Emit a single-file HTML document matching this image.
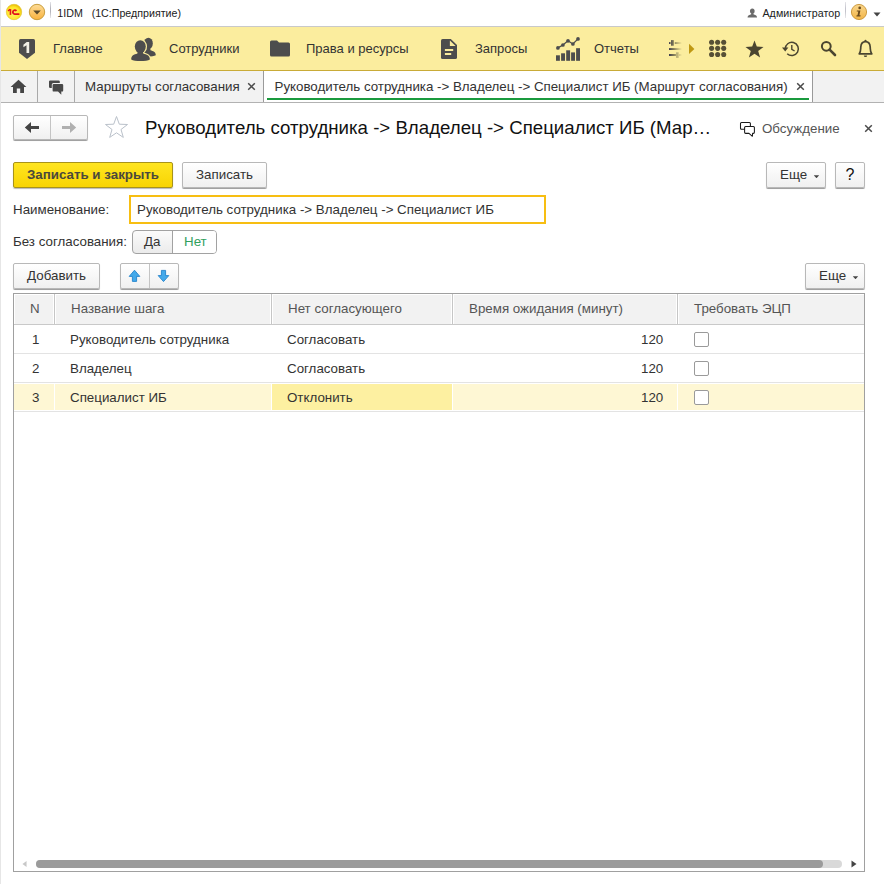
<!DOCTYPE html>
<html><head><meta charset="utf-8">
<style>
*{box-sizing:border-box;margin:0;padding:0}
html,body{width:884px;height:884px;overflow:hidden;background:#fff}
body{font-family:"Liberation Sans",sans-serif;font-size:13.33px;color:#333;position:relative}
.abs{position:absolute}
.t{position:absolute;white-space:pre;line-height:16px}
#edge{left:0;top:0;width:1px;height:884px;background:#e6e6e6}
#titlebar{left:0;top:0;width:884px;height:26px;background:#fff}
#tline{left:0;top:26px;width:884px;height:1px;background:#c9c9c9}
#nav{left:1px;top:27px;width:883px;height:43px;background:#fbed9e}
#navb{left:1px;top:70px;width:883px;height:1px;background:#c9ab37}
#tabs{left:1px;top:71px;width:883px;height:31px;background:#f2f2f2}
#tabsb{left:1px;top:102px;width:883px;height:1px;background:#b2b2b2}
.vsep{position:absolute;top:71px;width:1px;height:31px;background:#a9a9a9}
#acttab{left:263px;top:71px;width:550px;height:31px;background:#fff;border-left:1px solid #9a9a9a;border-right:1px solid #9a9a9a}
#actul{left:267px;top:98px;width:542px;height:2px;background:#1a9a3e}
.btn{position:absolute;border:1px solid #b8b8b8;border-radius:2px;background:linear-gradient(#ffffff,#f0f0f0);box-shadow:0 1px 0 rgba(0,0,0,.28),0 1px 1px rgba(0,0,0,.14);color:#333;text-align:center}
.nt{font-size:13px;color:#333}
.hs{top:294px;width:3px;height:30px;background:#c6c6c6;border-left:1px solid #fff;border-right:1px solid #fff}
.ws{top:383px;width:1px;height:28px;background:#fff}
</style></head><body>
<div class="abs" id="titlebar"></div>
<div class="abs" id="tline"></div>
<div class="abs" id="nav"></div>
<div class="abs" id="navb"></div>
<div class="abs" id="tabs"></div>
<div class="abs" id="tabsb"></div>
<div class="vsep" style="left:37px"></div>
<div class="vsep" style="left:74px"></div>
<div class="abs" id="acttab"></div>
<div class="abs" id="actul"></div>
<div class="abs" id="edge"></div>

<!-- title bar -->
<svg class="abs" style="left:5px;top:3px" width="18" height="18" viewBox="0 0 18 18"><defs><radialGradient id="g1" cx="0.45" cy="0.6" r="0.6"><stop offset="0" stop-color="#fff46a"/><stop offset="0.7" stop-color="#ffe628"/><stop offset="1" stop-color="#e8b800"/></radialGradient></defs><circle cx="9" cy="9" r="7.7" fill="url(#g1)" stroke="#e3c534" stroke-width="0.7"/><path d="M3.0 7.9 L5.2 6.4" fill="none" stroke="#e0141a" stroke-width="1.4"/><path d="M5.45 6.1 V11.9" fill="none" stroke="#e0141a" stroke-width="1.6"/><path d="M11.4 8 A1.95 1.95 0 1 0 9.7 11.05 H14.4" fill="none" stroke="#e0141a" stroke-width="1.8"/></svg>
<svg class="abs" style="left:28px;top:3px" width="18" height="18" viewBox="0 0 18 18"><defs><linearGradient id="g2" x1="0" y1="0" x2="0" y2="1"><stop offset="0" stop-color="#fddc98"/><stop offset="1" stop-color="#f8b23e"/></linearGradient></defs><circle cx="9" cy="9" r="7.7" fill="url(#g2)" stroke="#c39631" stroke-width="0.9"/><path d="M5.2 7.6 H12.8 L9 11.6 Z" fill="#5a4a2a"/></svg>
<div class="abs" style="left:50px;top:2px;width:1px;height:16px;background:linear-gradient(#e4e4e8,#b4b4bc 40%,#b4b4bc 60%,#e8e8ea)"></div>
<div class="t" style="left:57.3px;top:5px;font-size:10.67px;color:#222">1IDM   (1С:Предприятие)</div>
<svg class="abs" style="left:747.2px;top:7.6px" width="10.6" height="10.6" viewBox="0 0 10 10"><g fill="#6b6b6b"><ellipse cx="5" cy="2.9" rx="2.2" ry="2.5"/><path d="M0.5 8.9 C0.6 7 2.6 6.6 3.9 6 L4.1 4.8 H5.9 L6.1 6 C7.4 6.6 9.4 7 9.5 8.9Z"/></g></svg>
<div class="t" style="left:762.4px;top:5px;font-size:10.67px;letter-spacing:0.08px;color:#222">Администратор</div>
<div class="abs" style="left:845px;top:2px;width:1px;height:16px;background:linear-gradient(#e4e4e8,#c4c4cc 40%,#c4c4cc 60%,#e8e8ea)"></div>
<svg class="abs" style="left:850px;top:3px" width="18" height="18" viewBox="0 0 18 18"><defs><linearGradient id="g3" x1="0" y1="0" x2="0" y2="1"><stop offset="0" stop-color="#f9d68c"/><stop offset="1" stop-color="#f2b548"/></linearGradient></defs><circle cx="9" cy="9" r="7.6" fill="url(#g3)" stroke="#c79335" stroke-width="0.9"/><circle cx="9.7" cy="4.9" r="1.35" fill="#6a4a1c"/><path d="M6.9 7.4 H10.4 L9.4 12.3 H10.6 L10.4 13.4 H6.4 L6.6 12.3 H7.5 L8.3 8.5 H6.7Z" fill="#6a4a1c"/></svg>
<svg class="abs" style="left:873px;top:12px" width="8" height="5" viewBox="0 0 8 5"><path d="M0.5 0.5 H7.5 L4 4.5 Z" fill="#444"/></svg>

<!-- nav -->
<svg class="abs" style="left:18px;top:37px" width="18" height="24" viewBox="0 0 18 24"><path d="M2.5 2 H15.5 Q17 2 17 3.5 V15.8 L9 21.9 L1 15.8 V3.5 Q1 2 2.5 2 Z" fill="#4d4d4d"/><path d="M5.4 7.7 L8.7 5.1 H11.2 V16 H8.5 V8.2 L5.4 10.3 Z" fill="#f1efe6"/></svg>
<div class="t nt" style="left:53px;top:41px">Главное</div>
<svg class="abs" style="left:130px;top:36px" width="28" height="27" viewBox="0 0 28 27"><g fill="#4d4d4d"><ellipse cx="18.4" cy="7.4" rx="4.4" ry="5.7"/><path d="M11 19.6 C11 15.8 14 15.2 16.3 14.3 L16.6 11.5 H20.2 L20.5 14.3 C23 15.2 25.8 15.8 25.8 19.3 C23 20.9 14 20.9 11 19.6Z"/><g stroke="#fbed9e" stroke-width="2.4" fill="#fbed9e"><ellipse cx="10.3" cy="10.6" rx="5.5" ry="6.4"/><path d="M1.2 23.4 C1.2 19.4 4 18.8 7.4 17.6 L7.8 15 H12.8 L13.2 17.6 C16.6 18.8 19.9 19.4 19.9 23.4 C16.8 25.4 4.3 25.4 1.2 23.4Z"/></g><ellipse cx="10.3" cy="10.6" rx="5.5" ry="6.4"/><path d="M1.2 23.4 C1.2 19.4 4 18.8 7.4 17.6 L7.8 15 H12.8 L13.2 17.6 C16.6 18.8 19.9 19.4 19.9 23.4 C16.8 25.4 4.3 25.4 1.2 23.4Z"/></g></svg>
<div class="t nt" style="left:169px;top:41px">Сотрудники</div>
<svg class="abs" style="left:269px;top:39px" width="22" height="19" viewBox="0 0 22 19"><path d="M1 3 Q1 1.5 2.5 1.5 H8 L10 3.5 H19.5 Q21 3.5 21 5 V16 Q21 17.5 19.5 17.5 H2.5 Q1 17.5 1 16 Z" fill="#4d4d4d"/></svg>
<div class="t nt" style="left:306px;top:41px">Права и ресурсы</div>
<svg class="abs" style="left:440px;top:38px" width="18" height="22" viewBox="0 0 18 22"><path d="M2.6 1 H10.8 L17 6.9 V19.4 Q17 21 15.4 21 H2.6 Q1 21 1 19.4 V2.6 Q1 1 2.6 1Z" fill="#4d4d4d"/><path d="M9.9 2.6 V7.9 H15.6Z" fill="#fbed9e"/><path d="M4.9 11 H13.2 V13 H4.9Z M4.9 15 H11.2 V17 H4.9Z" fill="#fbed9e"/></svg>
<div class="t nt" style="left:475px;top:41px">Запросы</div>
<svg class="abs" style="left:555px;top:36px" width="26" height="26" viewBox="0 0 26 26"><g fill="#4d4d4d"><rect x="1" y="19.3" width="3.9" height="5.5"/><rect x="6.1" y="17.3" width="3.9" height="7.5"/><rect x="11.2" y="14.3" width="3.9" height="10.5"/><rect x="16.1" y="16.4" width="3.9" height="8.4"/><rect x="21.1" y="12.2" width="3.9" height="12.6"/><circle cx="2.9" cy="11.9" r="1.85"/><circle cx="7.9" cy="9" r="1.85"/><circle cx="13" cy="4.8" r="1.85"/><circle cx="17.9" cy="8" r="1.85"/><circle cx="23" cy="2.9" r="1.85"/></g><path d="M2.9 11.9 L7.9 9 L13 4.8 L17.9 8 L23 2.9" fill="none" stroke="#4d4d4d" stroke-width="1.3"/></svg>
<div class="t nt" style="left:594px;top:41px">Отчеты</div>
<svg class="abs" style="left:666px;top:38px" width="18" height="22" viewBox="0 0 18 22"><defs><linearGradient id="fade" gradientUnits="userSpaceOnUse" x1="3" y1="0" x2="16" y2="0"><stop offset="0" stop-color="#3c3c50"/><stop offset="0.35" stop-color="#55523f" stop-opacity="0.75"/><stop offset="1" stop-color="#6a6540" stop-opacity="0"/></linearGradient></defs><g fill="url(#fade)"><rect x="3" y="4.1" width="1.6" height="1.9"/><rect x="5" y="2.1" width="2.8" height="5.6"/><rect x="8.8" y="4.1" width="7" height="1.9"/><rect x="3" y="10.1" width="13" height="1.9"/><rect x="3" y="16" width="7" height="2"/><rect x="10.2" y="14.3" width="2.6" height="5.6"/><rect x="13" y="16" width="3" height="2"/></g></svg>
<svg class="abs" style="left:688px;top:43px" width="7" height="12" viewBox="0 0 7 12"><path d="M1 0.7 L6.4 5.9 L1 11.1Z" fill="#bf9812"/></svg>
<svg class="abs" style="left:708px;top:39px" width="20" height="20" viewBox="0 0 20 20"><g fill="#575036"><circle cx="3.60" cy="3.20" r="2.55"/><circle cx="9.65" cy="3.20" r="2.55"/><circle cx="15.70" cy="3.20" r="2.55"/><circle cx="3.60" cy="9.35" r="2.55"/><circle cx="9.65" cy="9.35" r="2.55"/><circle cx="15.70" cy="9.35" r="2.55"/><circle cx="3.60" cy="15.50" r="2.55"/><circle cx="9.65" cy="15.50" r="2.55"/><circle cx="15.70" cy="15.50" r="2.55"/></g></svg>
<svg class="abs" style="left:745px;top:40px" width="19" height="18" viewBox="0 0 19 18"><path d="M9.5 0.5 L11.8 6.6 L18.5 6.9 L13.2 11 L15.1 17.4 L9.5 13.7 L3.9 17.4 L5.8 11 L0.5 6.9 L7.2 6.6Z" fill="#4a4530"/></svg>
<svg class="abs" style="left:781px;top:40px" width="19" height="18" viewBox="0 0 19 18"><path d="M4.2 9 A6.6 6.6 0 1 1 6.2 13.7" fill="none" stroke="#4a4530" stroke-width="1.5"/><path d="M1 7.6 H7.4 L4.2 11.4Z" fill="#4a4530"/><path d="M10.8 5 V9.3 L13.6 11" fill="none" stroke="#4a4530" stroke-width="1.4"/></svg>
<svg class="abs" style="left:820px;top:40px" width="17" height="17" viewBox="0 0 17 17"><circle cx="6.3" cy="6.3" r="4.4" fill="none" stroke="#4a4530" stroke-width="2"/><path d="M9.6 9.6 L15 15" stroke="#4a4530" stroke-width="2.6" stroke-linecap="round"/></svg>
<svg class="abs" style="left:857px;top:39px" width="17" height="20" viewBox="0 0 17 20"><path d="M2.2 14.8 C4 13 3.6 10.5 3.8 8 C4 4.5 6 2.6 8.5 2.6 S13 4.5 13.2 8 C13.4 10.5 13 13 14.8 14.8 Z" fill="none" stroke="#4a4530" stroke-width="1.7" stroke-linejoin="round"/><circle cx="8.5" cy="1.8" r="1.1" fill="#4a4530"/><path d="M6.8 16.4 H10.2 A1.7 1.7 0 0 1 6.8 16.4Z" fill="#4a4530"/></svg>

<!-- tabs -->
<svg class="abs" style="left:10px;top:79px" width="17" height="15" viewBox="0 0 17 15"><path d="M8.5 0.8 L16.4 8 H14 V14 H10.2 V9.4 H6.8 V14 H3 V8 H0.6Z" fill="#454545"/></svg>
<svg class="abs" style="left:48px;top:79px" width="17" height="17" viewBox="0 0 17 17"><path d="M2.2 1.4 H10.6 Q11.8 1.4 11.8 2.6 V4 H5.4 Q3.8 4 3.8 5.6 V9 H2.2 Q1 9 1 7.8 V2.6 Q1 1.4 2.2 1.4Z" fill="#484848"/><path d="M5.8 4.9 H14 Q15.2 4.9 15.2 6.1 V11.4 Q15.2 12.6 14 12.6 H13.3 V15.8 L10 12.6 H5.8 Q4.6 12.6 4.6 11.4 V6.1 Q4.6 4.9 5.8 4.9Z" fill="#484848"/></svg>
<div class="t" style="left:85px;top:79px;color:#333">Маршруты согласования</div>
<svg class="abs" style="left:247px;top:82px" width="9" height="9" viewBox="0 0 9 9"><path d="M1.2 1.2 L7.8 7.8 M7.8 1.2 L1.2 7.8" stroke="#4a4a4a" stroke-width="1.5" fill="none"/></svg>
<div class="t" style="left:274.6px;top:79px;color:#333;letter-spacing:-0.02px">Руководитель сотрудника -> Владелец -> Специалист ИБ (Маршрут согласования)</div>
<svg class="abs" style="left:796px;top:82px" width="9" height="9" viewBox="0 0 9 9"><path d="M1.2 1.2 L7.8 7.8 M7.8 1.2 L1.2 7.8" stroke="#4a4a4a" stroke-width="1.5" fill="none"/></svg>

<!-- form header -->
<div class="btn" style="left:13px;top:115px;width:75px;height:25px"></div>
<div class="abs" style="left:50px;top:116px;width:1px;height:23px;background:#c4c4c4"></div>
<svg class="abs" style="left:24px;top:121px" width="16" height="13" viewBox="0 0 16 13"><path d="M0.8 6.5 L7 1 V4.9 H15 V8.1 H7 V12Z" fill="#444"/></svg>
<svg class="abs" style="left:61px;top:121px" width="16" height="13" viewBox="0 0 16 13"><path d="M15.2 6.5 L9 1 V4.9 H1 V8.1 H9 V12Z" fill="#b0b0b0"/></svg>
<svg class="abs" style="left:104px;top:115.3px" width="25" height="24" viewBox="0 0 25 24"><path d="M12.5 1.5 L15.3 9.2 L23.5 9.5 L17 14.5 L19.3 22.4 L12.5 17.8 L5.7 22.4 L8 14.5 L1.5 9.5 L9.7 9.2Z" fill="#fff" stroke="#bac1ca" stroke-width="1"/></svg>
<div class="t" style="left:145.1px;top:117px;font-size:18.67px;line-height:22px;color:#111">Руководитель сотрудника -> Владелец -> Специалист ИБ (Мар…</div>
<svg class="abs" style="left:739px;top:121px" width="17" height="17" viewBox="0 0 17 17"><rect x="1.5" y="1.5" width="9.9" height="6.8" rx="1" fill="#fff" stroke="#1a1a1a" stroke-width="1.05"/><path d="M6.6 5.4 H14.4 Q15.4 5.4 15.4 6.4 V11.35 Q15.4 12.35 14.4 12.35 H13.6 L13.4 15.3 L10 12.35 H6.6 Q5.6 12.35 5.6 11.35 V6.4 Q5.6 5.4 6.6 5.4Z" fill="#fff" stroke="#1a1a1a" stroke-width="1.05" stroke-linejoin="round"/></svg>
<div class="t" style="left:762px;top:121px;color:#555">Обсуждение</div>
<svg class="abs" style="left:864px;top:124px" width="9" height="9" viewBox="0 0 9 9"><path d="M1.2 1.2 L7.8 7.8 M7.8 1.2 L1.2 7.8" stroke="#4a4a4a" stroke-width="1.5" fill="none"/></svg>

<!-- buttons row -->
<div class="btn" style="left:13px;top:162px;width:160px;height:26px;background:linear-gradient(#ffe520,#f8d403);border-color:#a8931a;border-radius:2px;box-shadow:0 1px 1px rgba(0,0,0,.28);font-weight:bold;line-height:24px;color:#4a483c">Записать и закрыть</div>
<div class="btn" style="left:182px;top:162px;width:85px;height:26px;line-height:24px">Записать</div>
<div class="btn" style="left:766px;top:162px;width:60px;height:26px;line-height:24px;text-align:left;padding-left:13px">Еще</div>
<svg class="abs" style="left:813px;top:174.8px" width="7" height="3.4" viewBox="0 0 7 4"><path d="M0.3 0.3 H6.7 L3.5 3.8Z" fill="#444"/></svg>
<div class="btn" style="left:835px;top:162px;width:30px;height:26px;line-height:24px;font-size:16px;color:#111">?</div>

<!-- fields -->
<div class="t" style="left:13px;top:202px">Наименование:</div>
<div class="abs" style="left:129px;top:195px;width:417px;height:29px;border:2px solid #f7be12;background:#fff"></div>
<div class="t" style="left:137px;top:202px">Руководитель сотрудника -> Владелец -> Специалист ИБ</div>
<div class="t" style="left:13px;top:234px">Без согласования:</div>
<div class="btn" style="left:132px;top:230px;width:85px;height:24px;border-color:#a2a2a2;border-radius:4px;box-shadow:none;background:linear-gradient(#fbfbfb,#ebebeb)"></div>
<div class="abs" style="left:172px;top:231px;width:44px;height:22px;background:#fff;border-left:1px solid #a2a2a2;border-radius:0 3px 3px 0"></div>
<div class="t" style="left:144px;top:234px">Да</div>
<div class="t" style="left:184px;top:234px;color:#32a05e">Нет</div>

<!-- table toolbar -->
<div class="btn" style="left:13px;top:263px;width:87px;height:26px;line-height:24px">Добавить</div>
<div class="btn" style="left:120px;top:263px;width:59px;height:26px"></div>
<div class="abs" style="left:149px;top:264px;width:1px;height:24px;background:#c4c4c4"></div>
<svg class="abs" style="left:128px;top:269px" width="13" height="14" viewBox="0 0 13 14"><path d="M6.5 1.2 L11.8 7.4 H8.6 V12.4 H4.4 V7.4 H1.2Z" fill="#43a9ea" stroke="#2483cc" stroke-width="0.9" stroke-linejoin="round"/></svg>
<svg class="abs" style="left:157px;top:269px" width="13" height="14" viewBox="0 0 13 14"><path d="M6.5 12.6 L11.8 6.6 H8.6 V1.4 H4.4 V6.6 H1.2Z" fill="#43a9ea" stroke="#2483cc" stroke-width="0.9" stroke-linejoin="round"/></svg>
<div class="btn" style="left:805px;top:263px;width:60px;height:26px;line-height:24px;text-align:left;padding-left:13px">Еще</div>
<svg class="abs" style="left:852px;top:275.8px" width="7" height="3.4" viewBox="0 0 7 4"><path d="M0.3 0.3 H6.7 L3.5 3.8Z" fill="#444"/></svg>

<!-- table -->
<div class="abs" style="left:13px;top:293px;width:852px;height:579px;border:1px solid #a0a0a0;background:#fff"></div>
<div class="abs" style="left:14px;top:294px;width:850px;height:30px;background:#f2f2f2;border-top:1px solid #fff"></div>
<div class="abs" style="left:14px;top:324px;width:850px;height:1px;background:#c9c9c9"></div>
<div class="abs hs" style="left:53px"></div><div class="abs hs" style="left:270px"></div><div class="abs hs" style="left:451px"></div><div class="abs hs" style="left:676px"></div>
<div class="abs" style="left:14px;top:294px;width:1px;height:30px;background:#fff"></div>
<div class="abs" style="left:14px;top:353px;width:850px;height:1px;background:#e3e3e3"></div>
<div class="abs" style="left:14px;top:382px;width:850px;height:1px;background:#e3e3e3"></div>
<div class="abs" style="left:14px;top:384px;width:850px;height:26px;background:#fef7d4"></div>
<div class="abs" style="left:272px;top:384px;width:180px;height:26px;background:#fdf0a1"></div>
<div class="abs" style="left:14px;top:411px;width:850px;height:1px;background:#e3e3e3"></div>
<div class="abs ws" style="left:54px"></div><div class="abs ws" style="left:271px"></div><div class="abs ws" style="left:452px"></div><div class="abs ws" style="left:677px"></div>

<div class="t" style="left:30px;top:301px;color:#555">N</div>
<div class="t" style="left:71px;top:301px;color:#555">Название шага</div>
<div class="t" style="left:288px;top:301px;color:#555">Нет согласующего</div>
<div class="t" style="left:469px;top:301px;color:#555">Время ожидания (минут)</div>
<div class="t" style="left:694px;top:301px;color:#555">Требовать ЭЦП</div>

<div class="t" style="left:32px;top:332px">1</div>
<div class="t" style="left:70px;top:332px">Руководитель сотрудника</div>
<div class="t" style="left:287px;top:332px">Согласовать</div>
<div class="t" style="left:641px;top:332px">120</div>
<div class="abs cb" style="left:694px;top:332px;width:15px;height:15px;border:1px solid #9a9a9a;border-radius:2px;background:#fff"></div>

<div class="t" style="left:32px;top:361px">2</div>
<div class="t" style="left:70px;top:361px">Владелец</div>
<div class="t" style="left:287px;top:361px">Согласовать</div>
<div class="t" style="left:641px;top:361px">120</div>
<div class="abs cb" style="left:694px;top:361px;width:15px;height:15px;border:1px solid #9a9a9a;border-radius:2px;background:#fff"></div>

<div class="t" style="left:32px;top:390px">3</div>
<div class="t" style="left:70px;top:390px">Специалист ИБ</div>
<div class="t" style="left:287px;top:390px">Отклонить</div>
<div class="t" style="left:641px;top:390px">120</div>
<div class="abs cb" style="left:694px;top:390px;width:15px;height:15px;border:1px solid #9a9a9a;border-radius:2px;background:#fff"></div>

<!-- scrollbar -->
<svg class="abs" style="left:21.5px;top:860px" width="5" height="8" viewBox="0 0 6 8"><path d="M5.5 0.5 V7.5 L0.5 4Z" fill="#c8c8c8"/></svg>
<div class="abs" style="left:36px;top:860px;width:806px;height:8px;border-radius:4px;background:#d9d9d9"></div>
<div class="abs" style="left:36px;top:860px;width:787px;height:8px;border-radius:4px;background:#9b9b9b"></div>
<svg class="abs" style="left:851px;top:860px" width="6" height="8" viewBox="0 0 6 8"><path d="M0.5 0.5 V7.5 L5.5 4Z" fill="#444"/></svg>
</body></html>
